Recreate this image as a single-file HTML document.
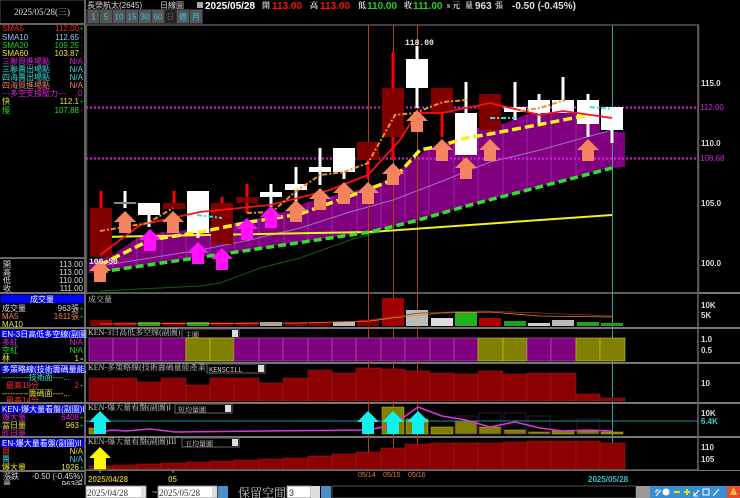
<!DOCTYPE html>
<html><head><meta charset="utf-8"><style>
html,body{margin:0;padding:0;background:#000;width:740px;height:498px;overflow:hidden}
svg{display:block}
text{font-family:"Liberation Sans","Noto Sans CJK TC",sans-serif}
.m{font-family:"Liberation Mono","Noto Sans CJK TC",monospace}
.s{font-family:"Liberation Serif","Noto Serif CJK SC","Noto Sans CJK TC",serif}
</style></head><body>
<svg width="740" height="498" viewBox="0 0 740 498" xmlns="http://www.w3.org/2000/svg">
<rect width="740" height="498" fill="#000"/>

<!-- LEFT PANEL -->
<rect x="0" y="0" width="85" height="24" fill="#000" stroke="#555" stroke-width="1"/>
<text x="42" y="15" fill="#ddd" font-size="9" text-anchor="middle" class="s">2025/05/28(三)</text>
<line x1="85" y1="0" x2="85" y2="498" stroke="#666" stroke-width="2"/>
<line x1="0" y1="24" x2="85" y2="24" stroke="#666" stroke-width="2"/>
<g font-size="8" class="s">
<text x="2" y="31" fill="#ff2020">SMA5</text><text x="79" y="31" fill="#ff2020" text-anchor="end">112.00</text><text x="80" y="31" fill="#20e020" font-size="6">+</text>
<text x="2" y="40" fill="#8cc8ff">SMA10</text><text x="79" y="40" fill="#8cc8ff" text-anchor="end">112.65</text><text x="80" y="40" fill="#ff3030" font-size="6">↑</text>
<text x="2" y="48" fill="#20d020">SMA20</text><text x="79" y="48" fill="#20d020" text-anchor="end">109.25</text><text x="80" y="48" fill="#ff3030" font-size="6">↑</text>
<text x="2" y="56" fill="#e8e820">SMA60</text><text x="79" y="56" fill="#e8e820" text-anchor="end">103.87</text><text x="80" y="56" fill="#ff3030" font-size="6">↑</text>
<text x="2" y="64" fill="#e020e0">三聯買進場點</text><text x="83" y="64" fill="#e020e0" text-anchor="end">N/A</text>
<text x="2" y="72" fill="#30e0e0">三聯賣出場點</text><text x="83" y="72" fill="#30e0e0" text-anchor="end">N/A</text>
<text x="2" y="80" fill="#30e0e0">四海賣出場點</text><text x="83" y="80" fill="#30e0e0" text-anchor="end">N/A</text>
<text x="2" y="88" fill="#f08060">四海買進場點</text><text x="83" y="88" fill="#f08060" text-anchor="end">N/A</text>
<text x="2" y="96" fill="#e020e0">---多空支撐壓力---</text><text x="78" y="96" fill="#e020e0">0</text>
<text x="2" y="104" fill="#e8e820">快</text><text x="79" y="104" fill="#e8e820" text-anchor="end">112.1</text><text x="80" y="104" fill="#20e020" font-size="6">+</text>
<text x="2" y="113" fill="#20e020">慢</text><text x="79" y="113" fill="#20e020" text-anchor="end">107.88</text><text x="80" y="113" fill="#ff3030" font-size="6">↑</text>
</g>
<line x1="0" y1="258" x2="85" y2="258" stroke="#666" stroke-width="2"/>
<g font-size="8" class="s" fill="#ddd">
<text x="3" y="267">開</text><text x="83" y="267" text-anchor="end">113.00</text>
<text x="3" y="275">高</text><text x="83" y="275" text-anchor="end">113.00</text>
<text x="3" y="283">低</text><text x="83" y="283" text-anchor="end">110.00</text>
<text x="3" y="291">收</text><text x="83" y="291" text-anchor="end">111.00</text>
</g>
<line x1="0" y1="293" x2="740" y2="293" stroke="#777" stroke-width="2"/>
<g font-size="8" class="s">
<rect x="1" y="295" width="83" height="8" fill="#0000ff"/>
<text x="42" y="302" fill="#fff" text-anchor="middle">成交量</text>
<text x="2" y="311" fill="#ddd">成交量</text><text x="79" y="311" fill="#ddd" text-anchor="end">963張</text><text x="80" y="311" fill="#20e020" font-size="6">+</text>
<text x="2" y="319" fill="#f08040">MA5</text><text x="79" y="319" fill="#f08040" text-anchor="end">1611張</text><text x="80" y="319" fill="#20e020" font-size="6">+</text>
<text x="2" y="327" fill="#e8e820">MA10</text>
</g>
<line x1="0" y1="328" x2="740" y2="328" stroke="#777" stroke-width="2"/>
<g font-size="8" class="s">
<rect x="1" y="330" width="83" height="8" fill="#0000ff"/>
<text x="2" y="337" fill="#fff">EN-3日高低多空線(副圖</text>
<text x="2" y="345" fill="#e020e0">多紅</text><text x="83" y="345" fill="#e020e0" text-anchor="end">N/A</text>
<text x="2" y="353" fill="#20e020">空紅</text><text x="83" y="353" fill="#20e020" text-anchor="end">N/A</text>
<text x="2" y="361" fill="#e8e820">林</text><text x="79" y="361" fill="#e8e820" text-anchor="end">1</text><text x="80" y="361" fill="#ddd" font-size="6">=</text>
</g>
<line x1="0" y1="363" x2="740" y2="363" stroke="#777" stroke-width="2"/>
<g font-size="8" class="s">
<rect x="1" y="365" width="83" height="8" fill="#0000ff"/>
<text x="2" y="372" fill="#fff">多策略線(技術籌碼量能,</text>
<text x="2" y="380" fill="#30e0e0">----------技術面----...</text>
<text x="6" y="388" fill="#ff3030">最高19分</text><text x="79" y="388" fill="#ff3030" text-anchor="end">2</text><text x="80" y="388" fill="#20e020" font-size="6">+</text>
<text x="2" y="396" fill="#e8e820">----------籌碼面----...</text>
<text x="6" y="403" fill="#ff3030">最高14分</text>
</g>
<line x1="0" y1="403" x2="740" y2="403" stroke="#777" stroke-width="2"/>
<g font-size="8" class="s">
<rect x="1" y="405" width="83" height="8" fill="#0000ff"/>
<text x="2" y="412" fill="#fff">KEN-爆大量看盤(副圖)I</text>
<text x="2" y="420" fill="#e020e0">爆大量</text><text x="79" y="420" fill="#e020e0" text-anchor="end">6408</text><text x="80" y="420" fill="#20e020" font-size="6">+</text>
<text x="2" y="428" fill="#e8e820">當日量</text><text x="79" y="428" fill="#e8e820" text-anchor="end">963</text><text x="80" y="428" fill="#20e020" font-size="6">+</text>
<text x="2" y="436" fill="#e020e0">昨日量</text>
</g>
<line x1="0" y1="437" x2="740" y2="437" stroke="#777" stroke-width="2"/>
<g font-size="8" class="s">
<rect x="1" y="439" width="83" height="8" fill="#0000ff"/>
<text x="2" y="446" fill="#fff">EN-爆大量看盤(副圖)II</text>
<text x="2" y="454" fill="#ff3030">買</text><text x="83" y="454" fill="#e8e820" text-anchor="end">N/A</text>
<text x="2" y="462" fill="#30e0e0">賣</text><text x="83" y="462" fill="#30e0e0" text-anchor="end">N/A</text>
<text x="2" y="470" fill="#e8e820">爆大量</text><text x="79" y="470" fill="#e8e820" text-anchor="end">1926</text><text x="80" y="470" fill="#20e020" font-size="6">+</text>
</g>
<line x1="0" y1="471" x2="740" y2="471" stroke="#777" stroke-width="2"/>
<g font-size="8" class="s" fill="#ddd">
<text x="3" y="479">漲跌</text><text x="83" y="479" text-anchor="end">-0.50 (-0.45%)</text>
<text x="3" y="487">量</text><text x="83" y="487" text-anchor="end">963張</text>
</g>

<!-- TITLE -->
<g font-size="8" class="s" fill="#ddd">
<text x="87" y="8">長榮航太(2645)</text>
<text x="160" y="8">日線圖</text>
<rect x="197" y="2" width="6" height="6" fill="#aaa"/>
</g>
<g font-size="10" font-weight="bold" class="m">
<text x="205" y="9" fill="#fff">2025/05/28</text>
<text x="262" y="8" fill="#ddd" font-size="8" class="s">開</text>
<text x="272" y="9" fill="#ff1010">113.00</text>
<text x="310" y="8" fill="#ddd" font-size="8" class="s">高</text>
<text x="320" y="9" fill="#ff1010">113.00</text>
<text x="358" y="8" fill="#ddd" font-size="8" class="s">低</text>
<text x="367" y="9" fill="#20d020">110.00</text>
<text x="404" y="8" fill="#ddd" font-size="8" class="s">收</text>
<text x="413" y="9" fill="#20d020">111.00</text>
<text x="447" y="8" fill="#ddd" font-size="8" class="s">s 元</text>
<text x="465" y="8" fill="#ddd" font-size="8" class="s">量</text>
<text x="475" y="9" fill="#ddd">963</text>
<text x="495" y="8" fill="#ddd" font-size="8" class="s">張</text>
<text x="512" y="9" fill="#ddd">-0.50 (-0.45%)</text>
</g>
<!-- buttons -->
<rect x="86" y="9" width="117" height="15" fill="#333"/>
<g font-size="8" fill="#30c8e0" class="m" text-anchor="middle">
<rect x="88" y="10" width="11" height="13" fill="#555"/><text x="93.5" y="19.5">1</text>
<rect x="100" y="10" width="12" height="13" fill="#555"/><text x="106" y="19.5">5</text>
<rect x="113" y="10" width="12" height="13" fill="#555"/><text x="119" y="19.5">10</text>
<rect x="126" y="10" width="12" height="13" fill="#555"/><text x="132" y="19.5">15</text>
<rect x="139" y="10" width="12" height="13" fill="#555"/><text x="145" y="19.5">30</text>
<rect x="152" y="10" width="12" height="13" fill="#555"/><text x="158" y="19.5">60</text>
<rect x="165" y="10" width="11" height="13" fill="#222"/><text x="170.5" y="19.5" fill="#555">日</text>
<rect x="177" y="10" width="12" height="13" fill="#555"/><text x="183" y="19.5">週</text>
<rect x="190" y="10" width="12" height="13" fill="#555"/><text x="196" y="19.5">月</text>
</g>

<!-- MAIN CHART -->
<rect x="86.5" y="25" width="612" height="268" fill="none" stroke="#555" stroke-width="1.5"/>
<line x1="698" y1="25" x2="698" y2="470" stroke="#666" stroke-width="1.5"/>
<!-- purple band -->
<polygon fill="#800080" points="89,262 113,255 137,238 162,232 186,230 210,230 235,223 259,218 284,212 308,202 332,196 357,190 381,183 405,166 429,148 454,140 478,128 503,124 527,114 551,112 576,112 600,110 600,132 625,132 625,167 612,168 600,170 520,192 470,205 415,221 370,232 300,242 250,250 200,257 150,264 100,272 89,273"/>
<g stroke="#b040b0" stroke-width="0.6">
<line x1="113" y1="255" x2="113" y2="270"/><line x1="137" y1="238" x2="137" y2="266"/><line x1="162" y1="232" x2="162" y2="262"/><line x1="186" y1="230" x2="186" y2="258"/><line x1="210" y1="230" x2="210" y2="254"/><line x1="235" y1="223" x2="235" y2="252"/><line x1="259" y1="218" x2="259" y2="249"/><line x1="284" y1="212" x2="284" y2="245"/><line x1="308" y1="202" x2="308" y2="241"/><line x1="332" y1="196" x2="332" y2="237"/><line x1="357" y1="190" x2="357" y2="234"/><line x1="381" y1="183" x2="381" y2="229"/><line x1="405" y1="166" x2="405" y2="218"/><line x1="429" y1="148" x2="429" y2="214"/><line x1="454" y1="140" x2="454" y2="207"/><line x1="478" y1="128" x2="478" y2="200"/><line x1="503" y1="124" x2="503" y2="196"/><line x1="527" y1="114" x2="527" y2="190"/><line x1="551" y1="112" x2="551" y2="184"/><line x1="576" y1="112" x2="576" y2="177"/>
</g>
<!-- thin lines -->
<polyline fill="none" stroke="#a070c0" stroke-width="1" points="100,266 150,258 200,250 250,240 300,228 350,212 393,200 440,182 490,162 540,150 612,130"/>
<polyline fill="none" stroke="#106010" stroke-width="1" points="100,291 200,286 220,283 260,268 300,258 350,240 393,228"/>
<!-- dotted lines -->
<line x1="86" y1="107.5" x2="698" y2="107.5" stroke="#e020e0" stroke-width="2" stroke-dasharray="2,2"/>
<line x1="86" y1="158.5" x2="698" y2="158.5" stroke="#e020e0" stroke-width="2" stroke-dasharray="2,2"/>
<!-- vertical lines -->
<g stroke="#a04818" stroke-width="1">
<line x1="368.5" y1="25" x2="368.5" y2="470"/><line x1="393.5" y1="25" x2="393.5" y2="470"/><line x1="417.5" y1="25" x2="417.5" y2="470"/>
</g>
<line x1="612.5" y1="25" x2="612.5" y2="470" stroke="#30a0a0" stroke-width="1"/>
<!-- yellow MA60 -->
<polyline fill="none" stroke="#f0f020" stroke-width="2" points="100,237 370,232 612,215"/>
<!-- green dashed -->
<polyline fill="none" stroke="#30e030" stroke-width="3.5" stroke-dasharray="8,4" points="100,272 250,250 370,232 415,221 470,205 520,192 612,168"/>
<!-- candles -->
<g stroke-width="3">
<line x1="101" y1="191" x2="101" y2="257" stroke="#ff0000"/>
<line x1="125" y1="191" x2="125" y2="208" stroke="#fff"/>
<line x1="149" y1="203" x2="149" y2="227" stroke="#fff"/>
<line x1="174" y1="191" x2="174" y2="209" stroke="#ff0000"/>
<line x1="198" y1="191" x2="198" y2="238" stroke="#fff"/>
<line x1="222" y1="197" x2="222" y2="244" stroke="#ff0000"/>
<line x1="247" y1="184" x2="247" y2="213" stroke="#ff0000"/>
<line x1="271" y1="184" x2="271" y2="207" stroke="#fff"/>
<line x1="296" y1="167" x2="296" y2="202" stroke="#fff"/>
<line x1="320" y1="148" x2="320" y2="185" stroke="#fff"/>
<line x1="344" y1="148" x2="344" y2="179" stroke="#fff"/>
<line x1="368" y1="142" x2="368" y2="179" stroke="#ff0000"/>
<line x1="393" y1="52" x2="393" y2="160" stroke="#ff0000"/>
<line x1="417" y1="46" x2="417" y2="108" stroke="#fff"/>
<line x1="442" y1="88" x2="442" y2="137" stroke="#ff0000"/>
<line x1="466" y1="82" x2="466" y2="155" stroke="#fff"/>
<line x1="490" y1="94" x2="490" y2="135" stroke="#ff0000"/>
<line x1="515" y1="82" x2="515" y2="120" stroke="#fff"/>
<line x1="539" y1="94" x2="539" y2="125" stroke="#fff"/>
<line x1="563" y1="77" x2="563" y2="113" stroke="#fff"/>
<line x1="588" y1="94" x2="588" y2="137" stroke="#fff"/>
<line x1="612" y1="107" x2="612" y2="143" stroke="#fff"/>
</g>
<g>
<rect x="90" y="208" width="22" height="49" fill="#800000"/>
<rect x="114" y="202" width="22" height="2" fill="#888"/>
<rect x="138" y="203" width="22" height="12" fill="#fff"/>
<rect x="163" y="203" width="22" height="6" fill="#800000"/>
<rect x="187" y="191" width="22" height="42" fill="#fff"/>
<rect x="211" y="203" width="22" height="41" fill="#800000"/>
<rect x="236" y="197" width="22" height="6" fill="#800000"/>
<rect x="260" y="192" width="22" height="5" fill="#fff"/>
<rect x="285" y="184" width="22" height="6" fill="#fff"/>
<rect x="309" y="167" width="22" height="5" fill="#fff"/>
<rect x="333" y="148" width="22" height="24" fill="#fff"/>
<rect x="357" y="142" width="22" height="18" fill="#800000"/>
<rect x="382" y="88" width="22" height="49" fill="#800000"/>
<rect x="406" y="59" width="22" height="29" fill="#fff"/>
<rect x="431" y="88" width="22" height="25" fill="#800000"/>
<rect x="455" y="113" width="22" height="42" fill="#fff"/>
<rect x="479" y="94" width="22" height="36" fill="#800000"/>
<rect x="504" y="107" width="22" height="5" fill="#fff"/>
<rect x="528" y="100" width="22" height="13" fill="#fff"/>
<rect x="552" y="100" width="22" height="13" fill="#fff"/>
<rect x="577" y="100" width="22" height="24" fill="#fff"/>
<rect x="601" y="107" width="22" height="23" fill="#fff"/>
</g>
<!-- yellow dashed -->
<polyline fill="none" stroke="#f8f020" stroke-width="3.5" stroke-dasharray="9,4" points="100,265 150,240 200,232 250,222 300,214 350,196 393,180 420,150 440,146 466,138 490,134 563,120 590,115"/>
<!-- red line -->
<polyline fill="none" stroke="#ff1010" stroke-width="1.8" points="100,255 140,225 200,212 270,205 330,190 368,175 400,140 417,113 442,113 490,103 540,115 563,111 612,118"/>
<!-- orange dash-dot -->
<polyline fill="none" stroke="#f09020" stroke-width="2" stroke-dasharray="5,2,2,2" points="100,231 148,223 173,208"/>
<polyline fill="none" stroke="#f09020" stroke-width="2" stroke-dasharray="5,2,2,2" points="247,213 272,212 295,192 320,175 344,172 368,163 395,115 415,113 443,102 467,100"/>
<polyline fill="none" stroke="#f09020" stroke-width="2" stroke-dasharray="5,2,2,2" points="520,111 540,108 565,100"/>
<g stroke="#30e0e0" stroke-width="2" stroke-dasharray="5,2,2,2">
<line x1="197" y1="215" x2="222" y2="218"/><line x1="490" y1="118" x2="515" y2="118"/><line x1="590" y1="107" x2="612" y2="109"/>
</g>
<!-- arrows -->
<g fill="#f4845f">
<polygon transform="translate(100,260)" points="0,0 11,11 6,11 6,22 -6,22 -6,11 -11,11"/>
<polygon transform="translate(125,211)" points="0,0 11,11 6,11 6,22 -6,22 -6,11 -11,11"/>
<polygon transform="translate(173,211)" points="0,0 11,11 6,11 6,22 -6,22 -6,11 -11,11"/>
<polygon transform="translate(296,200)" points="0,0 11,11 6,11 6,22 -6,22 -6,11 -11,11"/>
<polygon transform="translate(320,188)" points="0,0 11,11 6,11 6,22 -6,22 -6,11 -11,11"/>
<polygon transform="translate(344,182)" points="0,0 11,11 6,11 6,22 -6,22 -6,11 -11,11"/>
<polygon transform="translate(368,182)" points="0,0 11,11 6,11 6,22 -6,22 -6,11 -11,11"/>
<polygon transform="translate(393,163)" points="0,0 11,11 6,11 6,22 -6,22 -6,11 -11,11"/>
<polygon transform="translate(417,110)" points="0,0 11,11 6,11 6,22 -6,22 -6,11 -11,11"/>
<polygon transform="translate(442,139)" points="0,0 11,11 6,11 6,22 -6,22 -6,11 -11,11"/>
<polygon transform="translate(466,157)" points="0,0 11,11 6,11 6,22 -6,22 -6,11 -11,11"/>
<polygon transform="translate(490,139)" points="0,0 11,11 6,11 6,22 -6,22 -6,11 -11,11"/>
<polygon transform="translate(588,139)" points="0,0 11,11 6,11 6,22 -6,22 -6,11 -11,11"/>
</g>
<g fill="#ff10ff">
<polygon transform="translate(150,229)" points="0,0 11,11 6,11 6,22 -6,22 -6,11 -11,11"/>
<polygon transform="translate(198,242)" points="0,0 11,11 6,11 6,22 -6,22 -6,11 -11,11"/>
<polygon transform="translate(222,248)" points="0,0 11,11 6,11 6,22 -6,22 -6,11 -11,11"/>
<polygon transform="translate(247,218)" points="0,0 11,11 6,11 6,22 -6,22 -6,11 -11,11"/>
<polygon transform="translate(271,206)" points="0,0 11,11 6,11 6,22 -6,22 -6,11 -11,11"/>
</g>
<text x="405" y="45" fill="#eee" font-size="8" font-weight="bold" class="m">118.00</text>
<text x="89" y="264" fill="#eee" font-size="8" font-weight="bold" class="m">109.50</text>
<g font-size="8" font-weight="bold" class="m" fill="#ddd">
<text x="701" y="86">115.0</text><text x="701" y="146">110.0</text><text x="701" y="206">105.0</text><text x="701" y="266">100.0</text>
<text x="700" y="110" fill="#e020e0" font-weight="normal">112.00</text>
<text x="700" y="161" fill="#e020e0" font-weight="normal">108.68</text>
</g>

<!-- VOLUME PANEL -->
<text x="88" y="302" fill="#ccc" font-size="8" class="s">成交量</text>
<g>
<rect x="90" y="320" width="22" height="6" fill="#800000"/>
<rect x="114" y="322" width="22" height="4" fill="#800000"/>
<rect x="138" y="322" width="22" height="4" fill="#20a020"/>
<rect x="163" y="322" width="22" height="4" fill="#800000"/>
<rect x="187" y="322" width="22" height="4" fill="#20a020"/>
<rect x="211" y="322" width="22" height="4" fill="#800000"/>
<rect x="236" y="322" width="22" height="4" fill="#800000"/>
<rect x="260" y="322" width="22" height="4" fill="#aaa"/>
<rect x="285" y="322" width="22" height="4" fill="#800000"/>
<rect x="309" y="322" width="22" height="4" fill="#800000"/>
<rect x="333" y="322" width="22" height="4" fill="#bbb"/>
<rect x="357" y="320" width="22" height="6" fill="#800000"/>
<rect x="382" y="298" width="22" height="28" fill="#a00000"/>
<rect x="406" y="310" width="22" height="16" fill="#bbb"/>
<rect x="431" y="318" width="22" height="8" fill="#ddd"/>
<rect x="455" y="312" width="22" height="14" fill="#20b020"/>
<rect x="479" y="318" width="22" height="8" fill="#b00000"/>
<rect x="504" y="321" width="22" height="5" fill="#20a020"/>
<rect x="528" y="323" width="22" height="3" fill="#ccc"/>
<rect x="552" y="320" width="22" height="6" fill="#bbb"/>
<rect x="577" y="322" width="22" height="4" fill="#20a020"/>
<rect x="601" y="323" width="22" height="3" fill="#20a020"/>
</g>
<polyline fill="none" stroke="#f08020" stroke-width="0.8" points="100,324 300,323 370,321 393,318 440,313 490,312 540,316 612,317"/>
<polyline fill="none" stroke="#8a4010" stroke-width="0.8" points="370,320 420,313 480,311 540,313 612,316"/>
<g font-size="8" font-weight="bold" class="m" fill="#ddd"><text x="701" y="308">10K</text><text x="701" y="318">5K</text></g>

<!-- KEN3 PANEL -->
<text x="88" y="335" fill="#ccc" font-size="8" class="s">KEN-3日高低多空線(副圖)</text>
<rect x="182" y="329" width="57" height="9" fill="#000" stroke="#666"/>
<text x="185" y="337" fill="#ccc" font-size="7" class="s">主圖</text>
<rect x="232" y="330" width="6" height="7" fill="#ddd"/>
<g stroke="#c060c0" stroke-width="0.6">
<rect x="89" y="338" width="24" height="23" fill="#800080"/>
<rect x="113" y="338" width="24" height="23" fill="#800080"/>
<rect x="137" y="338" width="24" height="23" fill="#800080"/>
<rect x="161" y="338" width="25" height="23" fill="#800080"/>
<rect x="186" y="338" width="24" height="23" fill="#808000" stroke="#d0d000"/>
<rect x="210" y="338" width="24" height="23" fill="#808000" stroke="#d0d000"/>
<rect x="234" y="338" width="25" height="23" fill="#800080"/>
<rect x="259" y="338" width="24" height="23" fill="#800080"/>
<rect x="283" y="338" width="25" height="23" fill="#800080"/>
<rect x="308" y="338" width="24" height="23" fill="#800080"/>
<rect x="332" y="338" width="24" height="23" fill="#800080"/>
<rect x="356" y="338" width="25" height="23" fill="#800080"/>
<rect x="381" y="338" width="24" height="23" fill="#800080"/>
<rect x="405" y="338" width="25" height="23" fill="#800080"/>
<rect x="430" y="338" width="24" height="23" fill="#800080"/>
<rect x="454" y="338" width="24" height="23" fill="#800080"/>
<rect x="478" y="338" width="25" height="23" fill="#808000" stroke="#d0d000"/>
<rect x="503" y="338" width="24" height="23" fill="#808000" stroke="#d0d000"/>
<rect x="527" y="338" width="24" height="23" fill="#800080"/>
<rect x="551" y="338" width="25" height="23" fill="#800080"/>
<rect x="576" y="338" width="24" height="23" fill="#808000" stroke="#d0d000"/>
<rect x="600" y="338" width="25" height="23" fill="#808000" stroke="#d0d000"/>
</g>
<g font-size="8" font-weight="bold" class="m" fill="#ddd"><text x="701" y="342">1.0</text><text x="701" y="353">0.5</text></g>

<!-- STRATEGY PANEL -->
<g fill="#8b0000" stroke="#a02020" stroke-width="0.5">
<rect x="89" y="378" width="24" height="23"/><rect x="113" y="378" width="24" height="23"/><rect x="137" y="382" width="24" height="19"/><rect x="161" y="378" width="25" height="23"/><rect x="186" y="385" width="24" height="16"/><rect x="210" y="378" width="24" height="23"/><rect x="234" y="378" width="25" height="23"/><rect x="259" y="383" width="24" height="18"/><rect x="283" y="378" width="25" height="23"/><rect x="308" y="370" width="24" height="31"/><rect x="332" y="373" width="24" height="28"/><rect x="356" y="368" width="25" height="33"/><rect x="381" y="369" width="24" height="32"/><rect x="405" y="371" width="25" height="30"/><rect x="430" y="373" width="24" height="28"/><rect x="454" y="374" width="24" height="27"/><rect x="478" y="371" width="25" height="30"/><rect x="503" y="374" width="24" height="27"/><rect x="527" y="373" width="24" height="28"/><rect x="551" y="373" width="25" height="28"/><rect x="576" y="394" width="24" height="7"/><rect x="600" y="398" width="25" height="3"/>
</g>
<text x="88" y="370" fill="#ccc" font-size="8" class="s">KEN-多策略線(技術籌碼量能產業)</text>
<rect x="207" y="364" width="58" height="9" fill="#000" stroke="#666"/>
<text x="209" y="372" fill="#ccc" font-size="7" class="m">KENSCILL</text>
<rect x="258" y="365" width="6" height="7" fill="#ddd"/>
<g font-size="8" font-weight="bold" class="m" fill="#ddd"><text x="701" y="386">10</text></g>

<!-- BURST I -->
<g fill="#808000" stroke="#c0c000" stroke-width="0.5">
<rect x="89" y="428" width="6" height="6"/><rect x="382" y="407" width="22" height="27"/><rect x="406" y="419" width="22" height="15"/><rect x="431" y="427" width="22" height="7"/><rect x="455" y="421" width="22" height="13"/><rect x="479" y="427" width="22" height="7"/><rect x="504" y="430" width="22" height="4"/><rect x="528" y="432" width="22" height="2"/><rect x="552" y="431" width="22" height="3"/><rect x="577" y="431" width="22" height="3"/><rect x="601" y="432" width="22" height="2"/>
</g>
<g fill="none" stroke="#402040" stroke-width="0.8">
<rect x="455" y="416" width="22" height="18"/><rect x="479" y="413" width="22" height="21"/><rect x="504" y="413" width="22" height="21"/><rect x="528" y="416" width="22" height="18"/><rect x="577" y="419" width="22" height="15"/>
</g>
<line x1="86" y1="421" x2="698" y2="421" stroke="#208c8c" stroke-width="1"/>
<polyline fill="none" stroke="#e030e0" stroke-width="1.5" points="100,432 112,430 125,431 150,429 175,432 368,430 393,425 418,407 442,416 466,420 490,427 515,422 540,428 563,431 588,430 612,431"/>
<g fill="#10f0f0">
<polygon transform="translate(100,411)" points="0,0 11,11 6,11 6,23 -6,23 -6,11 -11,11"/>
<polygon transform="translate(368,411)" points="0,0 11,11 6,11 6,23 -6,23 -6,11 -11,11"/>
<polygon transform="translate(393,411)" points="0,0 11,11 6,11 6,23 -6,23 -6,11 -11,11"/>
<polygon transform="translate(418,411)" points="0,0 11,11 6,11 6,23 -6,23 -6,11 -11,11"/>
</g>
<text x="88" y="410" fill="#ccc" font-size="8" class="s">KEN-爆大量看盤(副圖)I</text>
<rect x="175" y="404" width="57" height="9" fill="#000" stroke="#666"/>
<text x="178" y="412" fill="#ccc" font-size="7" class="s">短均量圖</text>
<rect x="225" y="405" width="6" height="7" fill="#ddd"/>
<g font-size="8" font-weight="bold" class="m"><text x="701" y="416" fill="#ddd">10K</text><text x="701" y="424" fill="#30d0d0">6.4K</text></g>

<!-- BURST II -->
<g fill="#8b0000" stroke="#a02020" stroke-width="0.5">
<rect x="89" y="466" width="24" height="3"/><rect x="113" y="465" width="24" height="4"/><rect x="137" y="464" width="24" height="5"/><rect x="161" y="463" width="25" height="6"/><rect x="186" y="462" width="24" height="7"/><rect x="210" y="461" width="24" height="8"/><rect x="234" y="460" width="25" height="9"/><rect x="259" y="459" width="24" height="10"/><rect x="283" y="458" width="25" height="11"/><rect x="308" y="456" width="24" height="13"/><rect x="332" y="454" width="24" height="15"/><rect x="356" y="452" width="25" height="17"/><rect x="381" y="448" width="24" height="21"/><rect x="405" y="444" width="25" height="25"/><rect x="430" y="443" width="24" height="26"/><rect x="454" y="443" width="24" height="26"/><rect x="478" y="443" width="25" height="26"/><rect x="503" y="442" width="24" height="27"/><rect x="527" y="441" width="24" height="28"/><rect x="551" y="441" width="25" height="28"/><rect x="576" y="441" width="24" height="28"/><rect x="600" y="443" width="25" height="26"/>
</g>
<polygon transform="translate(100,447)" fill="#f8f800" points="0,0 11,11 6,11 6,23 -6,23 -6,11 -11,11"/>
<text x="88" y="444" fill="#ccc" font-size="8" class="s">KEN-爆大量看盤(副圖)III</text>
<rect x="182" y="438" width="57" height="9" fill="#000" stroke="#666"/>
<text x="185" y="446" fill="#ccc" font-size="7" class="s">五均量圖</text>
<rect x="232" y="439" width="6" height="7" fill="#ddd"/>
<g font-size="8" font-weight="bold" class="m" fill="#ddd"><text x="701" y="450">110</text><text x="701" y="462">105</text></g>
<line x1="86" y1="470" x2="698" y2="470" stroke="#666" stroke-width="1.5"/>

<!-- DATE ROW -->
<rect x="86" y="471" width="654" height="14" fill="#000"/>
<line x1="100" y1="470" x2="100" y2="473" stroke="#aaa"/><line x1="173" y1="470" x2="173" y2="473" stroke="#aaa"/>
<g font-size="8" font-weight="bold" class="m">
<text x="88" y="482" fill="#c0b020">2025/04/28</text>
<text x="168" y="482" fill="#c0b020">05</text>
<text x="358" y="477" fill="#e08030" font-weight="normal" font-size="7">05/14</text>
<text x="383" y="477" fill="#e08030" font-weight="normal" font-size="7">05/15</text>
<text x="408" y="477" fill="#e08030" font-weight="normal" font-size="7">05/16</text>
<text x="588" y="482" fill="#30c0d0">2025/05/28</text>
</g>

<!-- BOTTOM CONTROLS -->
<rect x="0" y="485" width="740" height="13" fill="#000"/>
<rect x="86" y="486" width="60" height="12" fill="#fff" stroke="#888"/>
<text x="87" y="496" fill="#333" font-size="9" class="s">2025/04/28</text>
<rect x="141" y="487" width="5" height="10" fill="#ddd"/>
<text x="152" y="495" fill="#ddd" font-size="9">~</text>
<rect x="158" y="486" width="59" height="12" fill="#fff" stroke="#888"/>
<text x="159" y="496" fill="#333" font-size="9" class="s">2025/05/28</text>
<rect x="212" y="487" width="5" height="10" fill="#ddd"/>
<rect x="218" y="486" width="10" height="12" fill="#4a90c8"/>
<text x="238" y="497" fill="#ccc" font-size="12" class="s">保留空間</text>
<rect x="287" y="486" width="24" height="12" fill="#fff" stroke="#888"/>
<text x="289" y="496" fill="#333" font-size="9">3</text>
<rect x="311" y="486" width="9" height="12" fill="#ddd"/>
<rect x="321" y="486" width="10" height="12" fill="#4a90c8"/>
<rect x="332" y="486" width="304" height="12" fill="#000" stroke="#555"/>
<rect x="636" y="486" width="14" height="12" fill="#999"/>
<rect x="650" y="486" width="77" height="12" fill="#3a8ed0"/>
<g stroke="#fff" stroke-width="1" fill="none">
<path d="M656,496 L661,490 M656,490 L656,493 M656,490 L659,490"/>
<circle cx="666" cy="492" r="3.5" fill="#fff" stroke="none"/>
<line x1="674" y1="492" x2="680" y2="492" stroke="#f0e000" stroke-width="2"/>
<path d="M684,492 H690 M687,489 V495" stroke="#f0e000" stroke-width="2"/>
<path d="M694,496 L699,490 M694,492 L694,496 L698,496"/>
<rect x="703" y="489" width="6" height="6"/>
<path d="M713,496 L719,489"/>
</g>
<rect x="727" y="486" width="13" height="12" fill="#e05030"/>
<path d="M730,495 Q733,487 733.5,487 Q734,487 737,495 Z" fill="#f0c040"/>
</svg>
</body></html>
